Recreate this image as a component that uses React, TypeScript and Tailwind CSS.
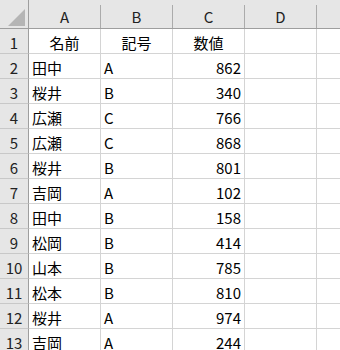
const rows: [string, string, string][] = [
  ['名前', '記号', '数値'],
  ['田中', 'A', '862'],
  ['桜井', 'B', '340'],
  ['広瀬', 'C', '766'],
  ['広瀬', 'C', '868'],
  ['桜井', 'B', '801'],
  ['吉岡', 'A', '102'],
  ['田中', 'B', '158'],
  ['松岡', 'B', '414'],
  ['山本', 'B', '785'],
  ['松本', 'B', '810'],
  ['桜井', 'A', '974'],
  ['吉岡', 'A', '244'],
];

const cols = ['A', 'B', 'C', 'D'];

export default function App() {
  return (
    <div
      className="w-[340px] h-[350px] overflow-hidden bg-white text-[15px] text-black"
      style={{ fontFamily: '"Noto Sans CJK JP", "Noto Sans", sans-serif' }}
    >
      <div className="grid grid-cols-[29px_72px_72px_72px_72px_1fr]">
        {/* header row */}
        <div className="h-[29px] bg-[#e6e6e6] border-b border-r border-[#9e9e9e] flex items-end justify-end pr-[3px] pb-[2px]">
          <svg width="17" height="17" viewBox="0 0 17 17">
            <polygon points="17,0 17,17 0,17" fill="#b5b5b5" />
          </svg>
        </div>
        {cols.map((c) => (
          <div key={c} className="h-[29px] bg-[#e6e6e6] border-b border-[#9e9e9e] flex">
            <div className="flex-1 mt-[5px] border-r border-[#ababab] flex items-center justify-center text-[#222] leading-none">
              {c}
            </div>
          </div>
        ))}
        <div className="h-[29px] bg-[#e6e6e6] border-b border-[#9e9e9e]" />

        {rows.map((r, i) => (
          <Row key={i} n={i + 1} cells={r} header={i === 0} />
        ))}
      </div>
    </div>
  );
}

function Row({ n, cells, header }: { n: number; cells: [string, string, string]; header: boolean }) {
  return (
    <>
      <div className="h-[25px] bg-[#e6e6e6] border-b border-[#c8c8c8] border-r border-r-[#9e9e9e] flex items-center justify-center text-[#222] leading-none pt-[2px]">
        {n}
      </div>
      <div className={`h-[25px] border-b border-r border-[#d4d4d4] flex items-center leading-none pt-[2px] ${header ? 'justify-center' : 'pl-[3px]'}`}>
        {cells[0]}
      </div>
      <div className={`h-[25px] border-b border-r border-[#d4d4d4] flex items-center leading-none pt-[2px] ${header ? 'justify-center' : 'pl-[3px]'}`}>
        {cells[1]}
      </div>
      <div className={`h-[25px] border-b border-r border-[#d4d4d4] flex items-center leading-none pt-[2px] ${header ? 'justify-center' : 'justify-end pr-[3px]'}`}>
        {cells[2]}
      </div>
      <div className="h-[25px] border-b border-r border-[#d4d4d4]" />
      <div className="h-[25px] border-b border-[#d4d4d4]" />
    </>
  );
}
